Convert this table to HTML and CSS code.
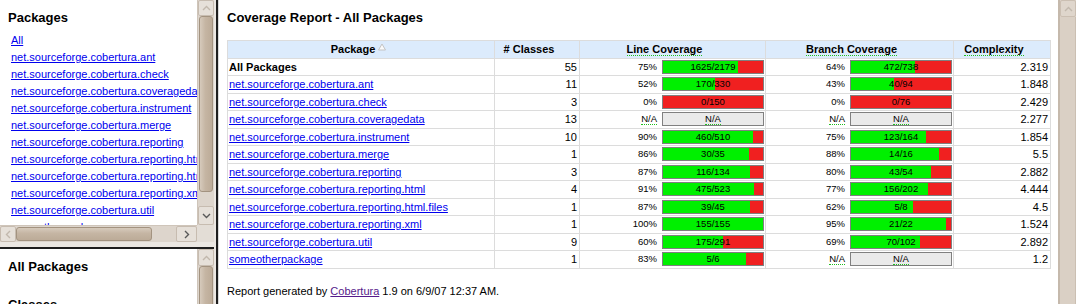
FILE: index.html
```html
<!DOCTYPE html>
<html lang="en">
<head>
<meta charset="utf-8">
<title>Coverage Report</title>
<link rel="stylesheet" href="styles.css">
</head>
<body>
<div class="frameset">
  <div class="leftcol">
    <div class="pane pane-top">
      <div class="view side-view">
        <h5 class="frame-title">Packages</h5>
        <ul class="pkg-list">
          <li><a href="#">All</a></li>
          <li><a href="#">net.sourceforge.cobertura.ant</a></li>
          <li><a href="#">net.sourceforge.cobertura.check</a></li>
          <li><a href="#">net.sourceforge.cobertura.coveragedata</a></li>
          <li><a href="#">net.sourceforge.cobertura.instrument</a></li>
          <li><a href="#">net.sourceforge.cobertura.merge</a></li>
          <li><a href="#">net.sourceforge.cobertura.reporting</a></li>
          <li><a href="#">net.sourceforge.cobertura.reporting.html</a></li>
          <li><a href="#">net.sourceforge.cobertura.reporting.html.files</a></li>
          <li><a href="#">net.sourceforge.cobertura.reporting.xml</a></li>
          <li><a href="#">net.sourceforge.cobertura.util</a></li>
          <li><a href="#">someotherpackage</a></li>
        </ul>
      </div>
      <div class="vscroll">
        <div class="sb-btn btn-up"><svg width="9" height="6" viewBox="0 0 9 6"><polyline points="1,5 4.5,1.5 8,5" class="chev dim"/></svg></div>
        <div class="sb-thumb v-thumb thumb-top"></div>
        <div class="sb-rest"></div>
        <div class="sb-btn btn-down"><svg width="9" height="6" viewBox="0 0 9 6"><polyline points="1,1 4.5,4.5 8,1" class="chev"/></svg></div>
      </div>
      <div class="hscroll">
        <div class="sb-btn btn-left"><svg width="6" height="9" viewBox="0 0 6 9"><polyline points="5,1 1.5,4.5 5,8" class="chev dim"/></svg></div>
        <div class="sb-thumb h-thumb"></div>
        <div class="sb-rest"></div>
        <div class="sb-btn btn-right"><svg width="6" height="9" viewBox="0 0 6 9"><polyline points="1,1 4.5,4.5 1,8" class="chev"/></svg></div>
      </div>
      <div class="corner"></div>
    </div>
    <div class="hdivider"></div>
    <div class="pane pane-bottom">
      <div class="view side-view">
        <h5 class="frame-title">All Packages</h5>
        <h5 class="frame-title next-title">Classes</h5>
      </div>
      <div class="vscroll">
        <div class="sb-btn btn-up2"><svg width="9" height="6" viewBox="0 0 9 6"><polyline points="1,5 4.5,1.5 8,5" class="chev dim"/></svg></div>
        <div class="sb-thumb v-thumb thumb-long"></div>
      </div>
    </div>
  </div>
  <div class="vdivider"></div>
  <div class="pane pane-main">
    <div class="view main-view">
      <h1 class="report-title">Coverage Report - All Packages</h1>
      <table class="report">
        <colgroup>
          <col class="c-pkg"><col class="c-cls"><col class="c-line"><col class="c-branch"><col class="c-cx">
        </colgroup>
        <thead>
          <tr>
            <td class="heading">Package<svg class="sort-arrow" width="16" height="10" viewBox="0 0 16 10"><polygon points="3.5,7 7,1 10.5,7" class="tri"/></svg></td>
            <td class="heading"># Classes<span class="slot"></span></td>
            <td class="heading"><span class="dfn">Line Coverage</span><span class="slot"></span></td>
            <td class="heading"><span class="dfn">Branch Coverage</span><span class="slot"></span></td>
            <td class="heading"><span class="dfn">Complexity</span><span class="slot"></span></td>
          </tr>
        </thead>
        <tbody>
          <tr>
            <td class="pkg"><b>All Packages</b></td>
            <td class="value">55</td>
            <td class="cov"><div class="cov-wrap"><span class="pct">75%</span><div class="bar"><div class="green" style="width:75px"></div><span class="bar-text">1625/2179</span></div></div></td>
            <td class="cov"><div class="cov-wrap"><span class="pct">64%</span><div class="bar"><div class="green" style="width:64px"></div><span class="bar-text">472/738</span></div></div></td>
            <td class="value">2.319</td>
          </tr>
          <tr>
            <td class="pkg"><a href="#">net.sourceforge.cobertura.ant</a></td>
            <td class="value">11</td>
            <td class="cov"><div class="cov-wrap"><span class="pct">52%</span><div class="bar"><div class="green" style="width:52px"></div><span class="bar-text">170/330</span></div></div></td>
            <td class="cov"><div class="cov-wrap"><span class="pct">43%</span><div class="bar"><div class="green" style="width:43px"></div><span class="bar-text">40/94</span></div></div></td>
            <td class="value">1.848</td>
          </tr>
          <tr>
            <td class="pkg"><a href="#">net.sourceforge.cobertura.check</a></td>
            <td class="value">3</td>
            <td class="cov"><div class="cov-wrap"><span class="pct">0%</span><div class="bar"><div class="green" style="width:0px"></div><span class="bar-text">0/150</span></div></div></td>
            <td class="cov"><div class="cov-wrap"><span class="pct">0%</span><div class="bar"><div class="green" style="width:0px"></div><span class="bar-text">0/76</span></div></div></td>
            <td class="value">2.429</td>
          </tr>
          <tr>
            <td class="pkg"><a href="#">net.sourceforge.cobertura.coveragedata</a></td>
            <td class="value">13</td>
            <td class="cov"><div class="cov-wrap"><span class="pct"><span class="dfn">N/A</span></span><div class="bar na"><span class="bar-text"><span class="dfn">N/A</span></span></div></div></td>
            <td class="cov"><div class="cov-wrap"><span class="pct"><span class="dfn">N/A</span></span><div class="bar na"><span class="bar-text"><span class="dfn">N/A</span></span></div></div></td>
            <td class="value">2.277</td>
          </tr>
          <tr>
            <td class="pkg"><a href="#">net.sourceforge.cobertura.instrument</a></td>
            <td class="value">10</td>
            <td class="cov"><div class="cov-wrap"><span class="pct">90%</span><div class="bar"><div class="green" style="width:90px"></div><span class="bar-text">460/510</span></div></div></td>
            <td class="cov"><div class="cov-wrap"><span class="pct">75%</span><div class="bar"><div class="green" style="width:75px"></div><span class="bar-text">123/164</span></div></div></td>
            <td class="value">1.854</td>
          </tr>
          <tr>
            <td class="pkg"><a href="#">net.sourceforge.cobertura.merge</a></td>
            <td class="value">1</td>
            <td class="cov"><div class="cov-wrap"><span class="pct">86%</span><div class="bar"><div class="green" style="width:86px"></div><span class="bar-text">30/35</span></div></div></td>
            <td class="cov"><div class="cov-wrap"><span class="pct">88%</span><div class="bar"><div class="green" style="width:88px"></div><span class="bar-text">14/16</span></div></div></td>
            <td class="value">5.5</td>
          </tr>
          <tr>
            <td class="pkg"><a href="#">net.sourceforge.cobertura.reporting</a></td>
            <td class="value">3</td>
            <td class="cov"><div class="cov-wrap"><span class="pct">87%</span><div class="bar"><div class="green" style="width:87px"></div><span class="bar-text">116/134</span></div></div></td>
            <td class="cov"><div class="cov-wrap"><span class="pct">80%</span><div class="bar"><div class="green" style="width:80px"></div><span class="bar-text">43/54</span></div></div></td>
            <td class="value">2.882</td>
          </tr>
          <tr>
            <td class="pkg"><a href="#">net.sourceforge.cobertura.reporting.html</a></td>
            <td class="value">4</td>
            <td class="cov"><div class="cov-wrap"><span class="pct">91%</span><div class="bar"><div class="green" style="width:91px"></div><span class="bar-text">475/523</span></div></div></td>
            <td class="cov"><div class="cov-wrap"><span class="pct">77%</span><div class="bar"><div class="green" style="width:77px"></div><span class="bar-text">156/202</span></div></div></td>
            <td class="value">4.444</td>
          </tr>
          <tr>
            <td class="pkg"><a href="#">net.sourceforge.cobertura.reporting.html.files</a></td>
            <td class="value">1</td>
            <td class="cov"><div class="cov-wrap"><span class="pct">87%</span><div class="bar"><div class="green" style="width:87px"></div><span class="bar-text">39/45</span></div></div></td>
            <td class="cov"><div class="cov-wrap"><span class="pct">62%</span><div class="bar"><div class="green" style="width:62px"></div><span class="bar-text">5/8</span></div></div></td>
            <td class="value">4.5</td>
          </tr>
          <tr>
            <td class="pkg"><a href="#">net.sourceforge.cobertura.reporting.xml</a></td>
            <td class="value">1</td>
            <td class="cov"><div class="cov-wrap"><span class="pct">100%</span><div class="bar"><div class="green" style="width:100px"></div><span class="bar-text">155/155</span></div></div></td>
            <td class="cov"><div class="cov-wrap"><span class="pct">95%</span><div class="bar"><div class="green" style="width:95px"></div><span class="bar-text">21/22</span></div></div></td>
            <td class="value">1.524</td>
          </tr>
          <tr>
            <td class="pkg"><a href="#">net.sourceforge.cobertura.util</a></td>
            <td class="value">9</td>
            <td class="cov"><div class="cov-wrap"><span class="pct">60%</span><div class="bar"><div class="green" style="width:60px"></div><span class="bar-text">175/291</span></div></div></td>
            <td class="cov"><div class="cov-wrap"><span class="pct">69%</span><div class="bar"><div class="green" style="width:69px"></div><span class="bar-text">70/102</span></div></div></td>
            <td class="value">2.892</td>
          </tr>
          <tr>
            <td class="pkg"><a href="#">someotherpackage</a></td>
            <td class="value">1</td>
            <td class="cov"><div class="cov-wrap"><span class="pct">83%</span><div class="bar"><div class="green" style="width:83px"></div><span class="bar-text">5/6</span></div></div></td>
            <td class="cov"><div class="cov-wrap"><span class="pct"><span class="dfn">N/A</span></span><div class="bar na"><span class="bar-text"><span class="dfn">N/A</span></span></div></div></td>
            <td class="value">1.2</td>
          </tr>
        </tbody>
      </table>
      <p class="footer">Report generated by <a class="visited" href="#">Cobertura</a> 1.9 on 6/9/07 12:37 AM.</p>
    </div>
    <div class="vscroll vscroll-main">
      <div class="sb-btn btn-up-main"><svg width="9" height="6" viewBox="0 0 9 6"><polyline points="1,5 4.5,1.5 8,5" class="chev dim"/></svg></div>
      <div class="main-rest"></div>
    </div>
  </div>
</div>
</body>
</html>
```

FILE: styles.css
```css
html, body {
  margin: 0;
  padding: 0;
  height: 100%;
  overflow: hidden;
  background: #ffffff;
}

body {
  font-family: "Liberation Sans", Arial, sans-serif;
  color: #000;
}

a { color: #0000ee; }
a.visited { color: #551a8b; }

.frameset {
  display: flex;
  height: 304px;
  width: 1076px;
}

.leftcol {
  width: 214px;
  display: flex;
  flex-direction: column;
  flex: none;
}

.pane {
  display: grid;
  overflow: hidden;
  background: #fff;
}

.pane-top {
  height: 242px;
  grid-template-columns: 197px 17px;
  grid-template-rows: 225px 17px;
  flex: none;
}

.pane-bottom {
  flex: 1;
  grid-template-columns: 197px 17px;
}

.pane-main {
  flex: 1;
  grid-template-columns: 1fr 18px;
  border-left: 1px solid #d9d9d9;
}

.view {
  overflow: hidden;
  min-width: 0;
}

.side-view {
  padding: 8px 0 0 8px;
  white-space: nowrap;
}

.main-view {
  padding: 8px;
}

.hdivider {
  height: 7px;
  flex: none;
  background: #ebe7e2;
  border-bottom: 2px solid #1e1e1e;
  box-sizing: border-box;
}

.vdivider {
  width: 4px;
  flex: none;
  background: #ebe7e2;
  border-right: 2px solid #1e1e1e;
  box-sizing: border-box;
}

/* headings */
.frame-title,
.report-title {
  font-size: 13px;
  font-weight: bold;
  line-height: 15px;
  margin: 2px 0 0;
}

.report-title { margin: 2px 0 15px; }

.next-title { margin-top: 23px; }

.pkg-list {
  list-style: none;
  margin: 7px 0 0;
  padding: 0 0 0 3px;
  font-size: 11px;
  line-height: 17px;
}

/* scrollbars */
.vscroll {
  display: flex;
  flex-direction: column;
  background: #ddd5cc;
  border-left: 1px solid #cfc5ba;
  box-sizing: border-box;
  overflow: hidden;
}

.hscroll {
  display: flex;
  background: #ddd5cc;
  border-top: 1px solid #cfc5ba;
  box-sizing: border-box;
  overflow: hidden;
}

.corner {
  background: #e3ddd6;
}

.sb-btn {
  flex: none;
  display: flex;
  align-items: center;
  justify-content: center;
  background: #e6e0d9;
  border: 1px solid #c7bcb0;
  border-radius: 2px;
  box-sizing: border-box;
}

.btn-up { height: 16px; }
.btn-down { height: 19px; }
.btn-up2 { height: 17px; }
.btn-left { width: 16px; }
.btn-right { width: 21px; }

.chev {
  fill: none;
  stroke: #595959;
  stroke-width: 1.4;
}

.chev.dim { stroke: #c2b8ad; }

.sb-thumb {
  flex: none;
  border: 1px solid #a39380;
  border-radius: 3px;
  box-sizing: border-box;
}

.v-thumb {
  background: linear-gradient(to right, #d6cabc, #c5b5a3 45%, #bcab98);
  margin: 0 1px;
}

.thumb-top { height: 176px; }
.thumb-long { height: 120px; }

.h-thumb {
  width: 136px;
  background: linear-gradient(to bottom, #d6cabc, #c5b5a3 45%, #bcab98);
  margin: 1px 0;
}

.sb-rest { flex: 1; }

.vscroll-main {
  background: #dcd2c7;
  border-left: 2px solid #c5b9ac;
}

.btn-up-main {
  height: 17px;
  background: #dfd6cc;
  border-color: #cbbfb2;
}

.main-rest {
  flex: 1;
  background: #dad0c5;
  border-right: 1px solid #cbbfb2;
}

/* report table */
.report {
  border-collapse: collapse;
  width: 100%;
  table-layout: fixed;
  font-size: 11px;
}

.c-pkg { width: 267px; }
.c-cls { width: 85px; }
.c-line { width: 186px; }
.c-branch { width: 188px; }
.c-cx { width: 97px; }

.report tr { height: 17.5px; }

.report td {
  border: 1px solid #dcdcdc;
  padding: 0 2px 0 2px;
  white-space: nowrap;
  vertical-align: middle;
}

.report td.heading {
  background: #dcebfc;
  font-weight: bold;
  text-align: center;
}

.sort-arrow {
  display: inline-block;
  vertical-align: baseline;
}

.tri {
  fill: #fafafa;
  stroke: #c4c4c4;
  stroke-width: 1;
}

.slot {
  display: inline-block;
  width: 16px;
}

.dfn {
  border-bottom: 1px dotted #1fbf1f;
}

.report td.pkg { padding-left: 1px; }

.report td.value {
  text-align: right;
  padding-right: 2px;
}

.report td.cov { padding: 0 1px 0 2px; }

.cov-wrap {
  display: flex;
  justify-content: flex-end;
  align-items: center;
  gap: 5px;
}

.pct {
  font-size: 9.5px;
  line-height: 12px;
}

.bar {
  position: relative;
  width: 100px;
  height: 12px;
  border: 1px solid #808080;
  background: #f02020;
  flex: none;
}

.bar.na { background: #eaeaea; }

.green {
  height: 12px;
  background: #00f000;
}

.bar-text {
  position: absolute;
  left: 0;
  right: 0;
  top: 0;
  text-align: center;
  font-size: 9.5px;
  line-height: 12px;
}

.footer {
  margin: 16px 0 0;
  font-size: 11px;
  line-height: 13px;
}
```
